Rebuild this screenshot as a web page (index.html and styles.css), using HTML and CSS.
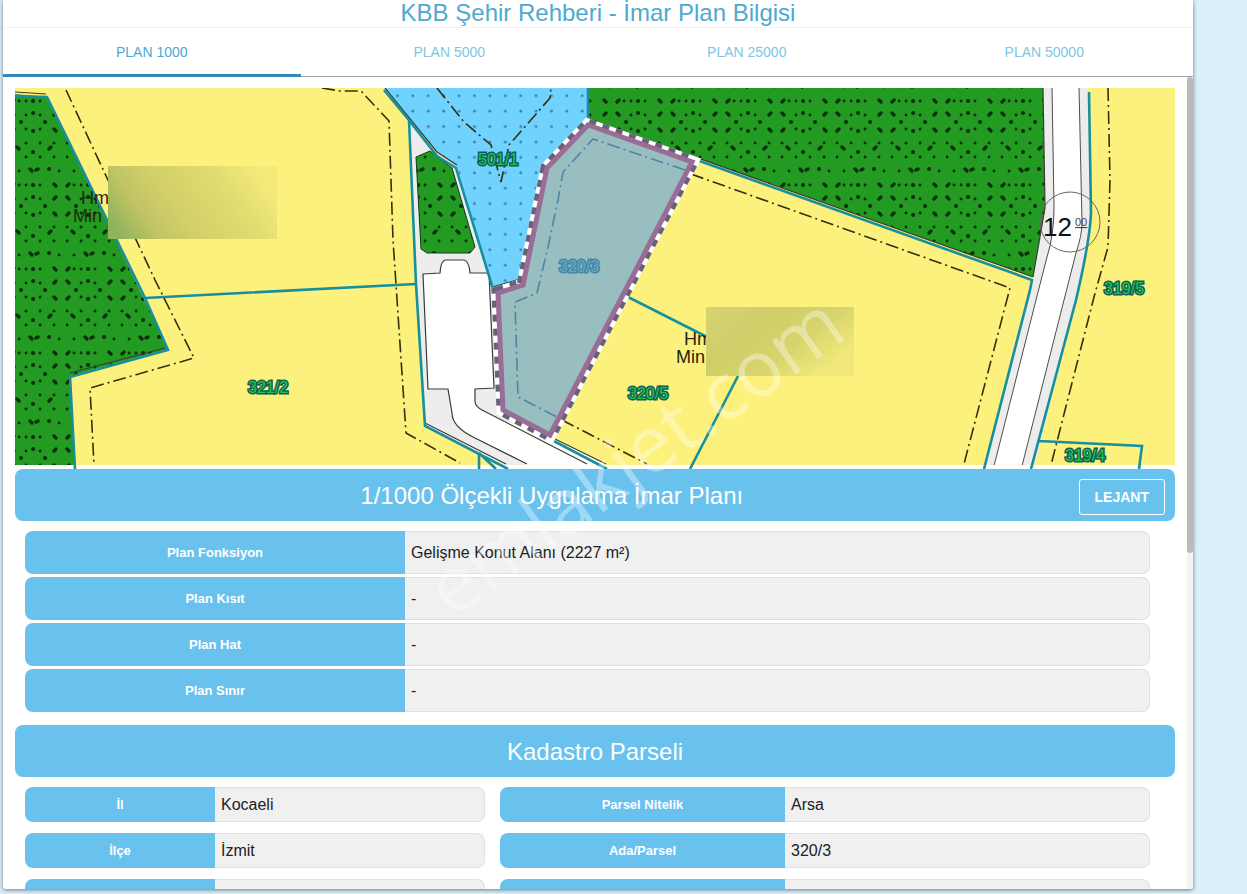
FILE: index.html
```html
<!DOCTYPE html>
<html lang="tr">
<head>
    <meta charset="UTF-8">
    <meta name="viewport" content="width=device-width, initial-scale=1.0">
    <title>KBB Şehir Rehberi - İmar Plan Bilgisi</title>
    <link rel="stylesheet" href="styles.css">
</head>
<body>
    <main class="panel">
        <h1 class="panel-title">KBB Şehir Rehberi - İmar Plan Bilgisi</h1>
        <nav class="tabs">
            <a class="tab active" href="#plan1000">PLAN 1000</a>
            <a class="tab" href="#plan5000">PLAN 5000</a>
            <a class="tab" href="#plan25000">PLAN 25000</a>
            <a class="tab" href="#plan50000">PLAN 50000</a>
        </nav>

        <div class="panel-body">
            <div class="content" id="plan1000">
                <!-- Plan map -->
                <svg class="map" viewBox="15 88 1160 381" role="img" aria-label="İmar planı haritası">
                    <defs>
                        <pattern id="forest" x="8" y="111" width="55" height="84" patternUnits="userSpaceOnUse">
                            <rect width="55" height="84" fill="#239a21"/>
                            <g stroke="#0a300a" stroke-linecap="round" fill="none">
                                <path stroke-width="4" d="M25 2h.1M13 11h.1M37 11h.1M25 20h.1M25 41h.1M25 74h.1M41 58h.1"/>
                                <path stroke-width="2.8" d="M18 4h.1M32 4h.1M18 18h.1M32 18h.1M4 32h.1M18 32h.1M32 32h.1M46 32h.1M4 46h.1M18 46h.1M32 46h.1M46 46h.1M11 60h.1M18 74h.1M32 74h.1M11 74h.1M51 60h.1"/>
                                <path stroke-width="3.3" d="M4 2l2 2M46 4l2-2M4 20l2-2M46 18l2 2M9 36l2 2M41 38l2-2M28 59l2-1M22 58l2 2M4 75l2-2M46 73l2 2"/>
                            </g>
                        </pattern>
                        <pattern id="water" x="390" y="88" width="15.4" height="15.4" patternUnits="userSpaceOnUse">
                            <rect width="15.4" height="15.4" fill="#70d3ff"/>
                            <circle cx="7.5" cy="7.7" r="1.5" fill="#3c83a8"/>
                        </pattern>
                        <linearGradient id="mask1" x1="0" y1=".7" x2="1" y2=".4">
                            <stop offset="0" stop-color="#8fb45c"/>
                            <stop offset=".2" stop-color="#c0c464"/>
                            <stop offset=".4" stop-color="#d3cf69"/>
                            <stop offset=".7" stop-color="#dfda6f"/>
                            <stop offset="1" stop-color="#f3ea79"/>
                        </linearGradient>
                        <linearGradient id="mask2" x1="0" y1="0" x2="1" y2=".6">
                            <stop offset="0" stop-color="#d6d473"/>
                            <stop offset=".4" stop-color="#cfce69"/>
                            <stop offset=".7" stop-color="#d9d56e"/>
                            <stop offset="1" stop-color="#f1e87a"/>
                        </linearGradient>
                    </defs>

                    <rect x="15" y="88" width="1160" height="377" fill="#fcf17c"/>

                    <!-- green areas -->
                    <path fill="url(#forest)" d="M15 94L47 97L168 349L70 376L74 465H15Z"/>
                    <path fill="url(#forest)" d="M588 88H1043L1045 208L1033 277L588 119Z"/>
                    <path class="thin" d="M15 92L46 94M70 373L165 348M588 119L1033 277"/>

                    <!-- service road -->
                    <path fill="#ededed" d="M409 120L437 154L457 167L494 288L503 410L553 438L606 465H500L425 425Z"/>
                    <path fill="#fff" d="M423 274L440 273Q441 260 446 260H464Q469 261 470 273H489L494 388L475 389V402Q476 407 482 410L505 421L553 438L606 465H527L470 435Q450 424 452 413L448 389H428Z"/>
                    <path class="thin" d="M527 464L475 438Q452 427 452 413L448 389H428L423 274L440 273Q441 260 446 260H464Q469 261 470 273H489L494 388L475 389V402Q476 407 482 410L587 464M553 438L606 464M425 423L506 464"/>
                    <path fill="url(#forest)" stroke="#173a15" d="M416 157L430 151L452 168L475 247L470 253H427L421 249Z"/>

                    <!-- water -->
                    <path fill="url(#water)" d="M385 88H588V119L545 165L535 230L520 280L493 289L457 167L437 152Z"/>
                    <path class="thin" d="M385 88L437 152L457 165M588 119L545 165M493 287L520 279"/>

                    <!-- main road -->
                    <path fill="#ececec" d="M1043 88H1087L1091 213Q1090 240 1076 300L1035 465H985L1033 277L1045 208Z"/>
                    <path fill="#fff" stroke="#54494c" d="M1052 87L1054 207Q1054 235 1047 257L1036 300L994 466H1022L1064 300L1076 253Q1082 235 1082 223L1079 87"/>
                    <path class="thin" d="M1043 88L1045 208L1033 277"/>
                    <rect x="985" y="465" width="50" height="4" fill="#fff"/>

                    <!-- parcel borders -->
                    <g class="parcel">
                        <path d="M15 96L47 97L145 298L168 350L70 377L75 469M145 298L416 284"/>
                        <path d="M384 90L408 119L437 156L456 168L493 289M409 120L416 284L425 426L508 469M479 453V469M479 453L496 469"/>
                        <path d="M588 88V119M694 159L1032 280L1030 290L984 469M628 297L707 337M738 376L690 469M550 439L607 469"/>
                        <path d="M1089 92L1091 213Q1090 240 1076 300L1031 469M1039 441L1142 446L1139 469"/>
                    </g>

                    <!-- building setback lines -->
                    <g class="setback">
                        <path d="M66 90L107 178L155 280L194 358L90 388L94 465"/>
                        <path d="M322 88L340 91H361L389 121L393 240L406 433L460 463"/>
                        <path d="M437 88L464 122L491 145L501 182L509 145L550 98L551 88"/>
                        <path d="M691 174L1010 288L964 464M562 420L647 464"/>
                        <path d="M1108 88L1110 180L1108 247L1094 297L1051 465"/>
                    </g>

                    <!-- selected parcel -->
                    <path class="selected-white" d="M588 125L692 162L550 435L503 410L498 293L523 285L547 168Z"/>
                    <path class="selected-dash" d="M588 125L692 162L550 435L503 410L498 293L523 285L547 168Z"/>
                    <path class="selected" d="M588 125L692 162L550 435L503 410L498 293L523 285L547 168Z"/>
                    <path class="setback inner" d="M685 170L593 139L563 172L558 200L548 247L537 293L515 302L518 397L557 417"/>

                    <g class="map-note">
                        <text x="81" y="204">Hm</text>
                        <text x="73" y="222">Min</text>
                        <text x="684" y="345">Hm</text>
                        <text x="676" y="363">Min</text>
                    </g>
                    <rect x="108" y="166" width="169" height="73" fill="url(#mask1)"/>
                    <rect x="706" y="307" width="148" height="69" fill="url(#mask2)"/>

                    <circle cx="1070" cy="222" r="30" fill="none" stroke="#666"/>
                    <text class="road-width" x="1043" y="236">12</text>
                    <text class="road-decimal" x="1075" y="226">00</text>

                    <g class="parcel-no">
                        <text x="478" y="165">501/1</text>
                        <text x="248" y="393">321/2</text>
                        <text x="628" y="399">320/5</text>
                        <text x="1104" y="294">319/5</text>
                        <text x="1065" y="461">319/4</text>
                        <text class="muted" x="559" y="272">320/3</text>
                    </g>
                </svg>

                <header class="section-bar">
                    <h2 class="section-title">1/1000 Ölçekli Uygulama İmar Planı</h2>
                    <button class="legend-btn" type="button">LEJANT</button>
                </header>
                <dl class="plan-list">
                    <div class="field wide"><dt>Plan Fonksiyon</dt><dd>Gelişme Konut Alanı (2227 m²)</dd></div>
                    <div class="field wide"><dt>Plan Kısıt</dt><dd>-</dd></div>
                    <div class="field wide"><dt>Plan Hat</dt><dd>-</dd></div>
                    <div class="field wide"><dt>Plan Sınır</dt><dd>-</dd></div>
                </dl>

                <header class="section-bar">
                    <h2 class="section-title">Kadastro Parseli</h2>
                </header>
                <dl class="parcel-list">
                    <div class="field left"><dt>İl</dt><dd>Kocaeli</dd></div>
                    <div class="field right"><dt>Parsel Nitelik</dt><dd>Arsa</dd></div>
                    <div class="field left"><dt>İlçe</dt><dd>İzmit</dd></div>
                    <div class="field right"><dt>Ada/Parsel</dt><dd>320/3</dd></div>
                    <div class="field left"><dt></dt><dd></dd></div>
                    <div class="field right"><dt></dt><dd></dd></div>
                </dl>
            </div>
            <div class="scroll-track"><div class="scroll-thumb"></div></div>
        </div>
    </main>

    <svg class="watermark" width="500" height="400" viewBox="400 260 500 400" aria-hidden="true">
        <text transform="translate(452 620) rotate(-35.5)">emlakjet.com</text>
    </svg>
</body>
</html>
```
FILE: styles.css
```css
* {
    box-sizing: border-box;
}
body {
    margin: 0;
    height: 100vh;
    overflow: hidden;
    background-color: #dbf0fb;
    font-family: "Liberation Sans", Arial, sans-serif;
    color: #212121;
}
.panel {
    display: flex;
    flex-direction: column;
    height: calc(100vh - 5px);
    margin: 0 54px 0 3px;
    background-color: #fff;
    border-radius: 0 0 3px 3px;
    box-shadow: 0 1px 4px rgba(0, 0, 0, 0.5);
    overflow: hidden;
}
.panel-title {
    margin: 0;
    height: 28px;
    border-bottom: 1px solid #f3f5f5;
    font-size: 24px;
    font-weight: 400;
    line-height: 26px;
    text-align: center;
    color: #4ea9cf;
}

/* Tabs */
.tabs {
    display: flex;
    flex-shrink: 0;
    height: 49px;
    border-bottom: 1px solid #9aa5a9;
}
.tab {
    flex: 1;
    font-size: 14px;
    line-height: 48px;
    text-align: center;
    text-decoration: none;
    color: #80c6e2;
}
.tab.active {
    height: 49px;
    border-bottom: 3px solid #3489b8;
    color: #4ea9cf;
}

.panel-body {
    display: flex;
    flex: 1;
    min-height: 0;
    overflow: hidden;
}
.content {
    flex: 1;
    padding: 11px 12px 0;
}
.scroll-track {
    width: 6px;
    background-color: #f3f3f3;
}
.scroll-thumb {
    height: 476px;
    border-radius: 3px;
    background-color: #bababa;
}

/* Map */
.map {
    display: block;
    width: 100%;
    height: auto;
}
.thin {
    fill: none;
    stroke: #3b3b34;
    stroke-width: 1.2;
}
.parcel {
    fill: none;
    stroke: #178f9f;
    stroke-width: 2.6;
}
.setback {
    fill: none;
    stroke: #33300f;
    stroke-width: 1.6;
    stroke-dasharray: 13 4 2 4;
}
.setback.inner {
    stroke: #5483a3;
}
.selected-white {
    fill: none;
    stroke: #fff;
    stroke-width: 13;
}
.selected-dash {
    fill: none;
    stroke: #67627a;
    stroke-width: 13;
    stroke-dasharray: 7 7;
}
.selected {
    fill: #98bebf;
    stroke: #9a6d96;
    stroke-width: 5;
}
.map-note {
    font-size: 18px;
    fill: #26260f;
}
.road-width {
    font-size: 26px;
    fill: #111;
}
.road-decimal {
    font-size: 11px;
    text-decoration: underline;
    fill: #444;
}
.parcel-no {
    font-size: 16px;
    font-weight: 400;
    fill: #25c444;
    stroke: #0c5f5c;
    stroke-width: 3;
    paint-order: stroke;
}
.parcel-no .muted {
    fill: #66a9bd;
    stroke: #4487ab;
}

/* Section bars */
.section-bar {
    display: flex;
    align-items: center;
    height: 52px;
    padding: 0 10px;
    border-radius: 8px;
    background-color: #69c2ee;
    color: #fff;
}
.section-title {
    flex: 1;
    margin: 0;
    padding-top: 2px;
    font-size: 24px;
    font-weight: 400;
    text-align: center;
}
.legend-btn {
    height: 36px;
    margin-top: 4px;
    padding: 0 15px;
    border: 1px solid #fff;
    border-radius: 3px;
    background: none;
    font-family: inherit;
    font-size: 14px;
    font-weight: 700;
    color: #fff;
}

/* Info rows */
.plan-list,
.parcel-list {
    display: grid;
    margin: 0;
    padding: 10px;
}
.plan-list {
    gap: 3px;
    padding-bottom: 13px;
}
.parcel-list {
    grid-template-columns: 5fr 7fr;
    row-gap: 11px;
}
.field {
    display: grid;
    height: 35px;
}
.field.wide {
    grid-template-columns: 1fr 2fr;
    height: 43px;
}
.field.left {
    grid-template-columns: 2fr 3fr;
}
.field.right {
    grid-template-columns: 3fr 4fr;
}
.field dt,
.field dd {
    display: flex;
    align-items: center;
}
.field dt {
    justify-content: center;
    border-radius: 8px 0 0 8px;
    background-color: #69c2ee;
    font-size: 13px;
    font-weight: 700;
    color: #fff;
}
.field dd {
    margin: 0 15px 0 0;
    padding-left: 6px;
    border: 1px solid #e0e0e0;
    border-left: 0;
    border-radius: 0 8px 8px 0;
    background-color: #f0f0f0;
    font-size: 16px;
}

/* Watermark over the page */
.watermark {
    position: absolute;
    left: 400px;
    top: 260px;
    pointer-events: none;
}
.watermark text {
    font-family: "Open Sans", "Noto Sans", sans-serif;
    font-size: 78px;
    fill: #fff;
    fill-opacity: 0.36;
}
```
